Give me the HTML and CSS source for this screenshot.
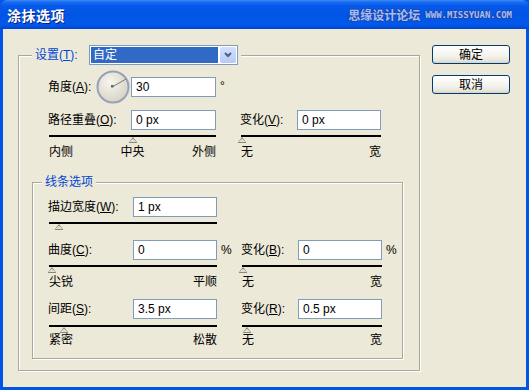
FILE: index.html
```html
<!DOCTYPE html>
<html lang="zh-CN">
<head>
    <meta charset="UTF-8">
    <title>涂抹选项</title>
    <link rel="stylesheet" href="styles.css">
</head>
<body>
    <div class="window">
        <div class="titlebar">
            <span class="title">涂抹选项</span>
            <span class="watermark">
                <span class="wm-cn">思缘设计论坛</span>
                <span class="wm-en">WWW.MISSYUAN.COM</span>
            </span>
        </div>

        <div class="client">
            <fieldset class="group group-main">
                <legend class="legend-main">
                    <span class="set-label">设置(<u>T</u>):</span>
                    <span class="dropdown">
                        <span class="dropdown-value">自定</span>
                        <span class="dropdown-btn">
                            <svg width="8" height="6" viewBox="0 0 8 6"><polyline points="1,1 4,4 7,1" fill="none" stroke="#4d6185" stroke-width="2"/></svg>
                        </span>
                    </span>
                </legend>

                <div class="section-top">
                    <div class="row row-angle">
                        <div class="field">
                            <span class="lbl lbl-angle">角度(<u>A</u>):</span>
                            <svg class="dial" width="34" height="34" viewBox="0 0 34 34">
                                <defs>
                                    <radialGradient id="dialFill" cx="40%" cy="35%" r="70%">
                                        <stop offset="0" stop-color="#f6f5ef"/>
                                        <stop offset="1" stop-color="#d6d2c2"/>
                                    </radialGradient>
                                </defs>
                                <circle cx="17" cy="17" r="15.5" fill="url(#dialFill)" stroke="#97a0bb" stroke-width="2"/>
                                <line x1="17" y1="16.5" x2="30" y2="9" stroke="#777" stroke-width="1"/>
                                <rect x="15" y="15" width="2.5" height="2.5" fill="#666"/>
                            </svg>
                            <input class="num num-angle" type="text" value="30">
                        </div>
                        <span class="unit unit-deg">°</span>
                    </div>

                    <div class="row row-field">
                        <div class="field">
                            <span class="lbl">路径重叠(<u>O</u>):</span>
                            <input class="num" type="text" value="0 px">
                        </div>
                        <span class="unit"></span>
                        <div class="field">
                            <span class="lbl">变化(<u>V</u>):</span>
                            <input class="num" type="text" value="0 px">
                        </div>
                    </div>

                    <div class="row row-slider">
                        <div class="slider"><span class="thumb" style="left: 85px"></span></div>
                        <span class="unit"></span>
                        <div class="slider"><span class="thumb" style="left: 2px"></span></div>
                    </div>

                    <div class="row row-ticks">
                        <div class="ticks"><span>内侧</span><span>中央</span><span>外侧</span></div>
                        <span class="unit"></span>
                        <div class="ticks"><span>无</span><span>宽</span></div>
                    </div>
                </div>

                <fieldset class="group group-line">
                    <legend class="legend-line">线条选项</legend>

                    <div class="row row-field row-first">
                        <div class="field">
                            <span class="lbl">描边宽度(<u>W</u>):</span>
                            <input class="num" type="text" value="1 px">
                        </div>
                    </div>
                    <div class="row row-slider">
                        <div class="slider"><span class="thumb" style="left: 11px"></span></div>
                    </div>

                    <div class="row row-field row-gap">
                        <div class="field">
                            <span class="lbl">曲度(<u>C</u>):</span>
                            <input class="num" type="text" value="0">
                        </div>
                        <span class="unit">%</span>
                        <div class="field">
                            <span class="lbl">变化(<u>B</u>):</span>
                            <input class="num" type="text" value="0">
                        </div>
                        <span class="unit">%</span>
                    </div>
                    <div class="row row-slider">
                        <div class="slider"><span class="thumb" style="left: 4px"></span></div>
                        <span class="unit"></span>
                        <div class="slider"><span class="thumb" style="left: 2px"></span></div>
                    </div>
                    <div class="row row-ticks">
                        <div class="ticks"><span>尖锐</span><span>平顺</span></div>
                        <span class="unit"></span>
                        <div class="ticks"><span>无</span><span>宽</span></div>
                    </div>

                    <div class="row row-field row-gap">
                        <div class="field">
                            <span class="lbl">间距(<u>S</u>):</span>
                            <input class="num" type="text" value="3.5 px">
                        </div>
                        <span class="unit"></span>
                        <div class="field">
                            <span class="lbl">变化(<u>R</u>):</span>
                            <input class="num" type="text" value="0.5 px">
                        </div>
                    </div>
                    <div class="row row-slider row-slider-last">
                        <div class="slider"><span class="thumb" style="left: 16px"></span></div>
                        <span class="unit"></span>
                        <div class="slider"><span class="thumb" style="left: 6px"></span></div>
                    </div>
                    <div class="row row-ticks row-ticks-last">
                        <div class="ticks"><span>紧密</span><span>松散</span></div>
                        <span class="unit"></span>
                        <div class="ticks"><span>无</span><span>宽</span></div>
                    </div>
                </fieldset>
            </fieldset>

            <div class="actions">
                <button class="btn">确定</button>
                <button class="btn">取消</button>
            </div>
        </div>
    </div>
</body>
</html>
```

FILE: styles.css
```css
html, body {
    margin: 0;
    padding: 0;
    background: #0055e5;
}
body {
    font-family: "Liberation Sans", "Noto Sans CJK SC", sans-serif;
    font-size: 12px;
    line-height: 14px;
    color: #000;
}
.window {
    width: 529px;
    height: 390px;
    display: flex;
    flex-direction: column;
    background: #0055e5;
    box-sizing: border-box;
}
.titlebar {
    height: 29px;
    flex: none;
    display: flex;
    align-items: center;
    justify-content: space-between;
    padding: 0 17px 0 7px;
    background: linear-gradient(to bottom, #3d8ff8 0px, #1a6cf0 2px, #0459ea 6px, #0055e5 16px, #0259ea 24px, #0046d2 29px);
    border-radius: 7px 7px 0 0;
}
.title {
    color: #fff;
    font-family: "Noto Sans CJK SC", sans-serif;
    font-size: 14px;
    font-weight: bold;
    line-height: 16px;
    letter-spacing: 0.5px;
    text-shadow: 1px 1px 0 #0a1f80;
    margin-top: 1px;
}
.watermark {
    display: flex;
    align-items: center;
    gap: 5px;
    color: #a4bef0;
    text-shadow: 1px 0 0 #1f45b0, -1px 0 0 #1f45b0, 0 1px 0 #1f45b0, 0 -1px 0 #1f45b0;
}
.wm-cn {
    font-family: "Noto Sans CJK SC", sans-serif;
    font-size: 12px;
    font-weight: bold;
}
.wm-en {
    font-family: "DejaVu Sans Mono", monospace;
    font-size: 9px;
    font-weight: bold;
    margin-top: 1px;
}

.client {
    flex: 1;
    margin: 0 3px 3px 3px;
    background: #ece9d8;
    display: flex;
    align-items: flex-start;
    padding: 16px 0 0 15px;
}

.group {
    margin: 0;
    min-width: 0;
    box-sizing: border-box;
    border: 1px solid #aca899;
    box-shadow: inset 1px 1px 0 #fff, 1px 1px 0 #fff;
}
.group-main {
    width: 402px;
    padding: 0 0 11px 13px;
}
.legend-main {
    padding: 0 3px;
    height: 20px;
    display: flex;
    align-items: center;
    background: #ece9d8;
}
.set-label {
    width: 54px;
    color: #0046d5;
}
.dropdown {
    width: 149px;
    height: 20px;
    box-sizing: border-box;
    border: 1px solid #7f9db9;
    background: #fff;
    display: flex;
    padding: 1px;
    gap: 2px;
}
.dropdown-value {
    flex: 1;
    background: #316ac5;
    color: #fff;
    padding-left: 2px;
    line-height: 16px;
}
.dropdown-btn {
    width: 16px;
    display: flex;
    align-items: center;
    justify-content: center;
    background: linear-gradient(#d4e1fc, #b6caf6);
    border-radius: 2px;
}

.section-top {
    margin-left: 16px;
}
.row {
    display: grid;
    grid-template-columns: 168px 24px 141px;
}
.group-line .row {
    grid-template-columns: 169px 24px 141px auto;
}
.row-angle {
    margin-top: 5px;
    height: 34px;
    align-items: center;
}
.row-field {
    margin-top: 6px;
    align-items: center;
}
.row-slider {
    margin-top: 5px;
}
.row-ticks {
    margin-top: 2px;
}
.field {
    display: flex;
    align-items: center;
}
.lbl {
    flex: 1;
    white-space: nowrap;
}
.lbl-angle {
    flex: none;
    width: 48px;
}
.dial {
    display: block;
    margin-right: 1px;
}
.num {
    width: 85px;
    height: 20px;
    box-sizing: border-box;
    border: 1px solid #7f9db9;
    padding: 0 0 0 4px;
    margin: 0;
    font: inherit;
    color: #000;
    background: #fff;
    outline: none;
}
.field + .unit + .field .num,
.group-line .num {
    width: 84px;
}
.unit {
    padding-left: 4px;
}
.unit-deg {
    align-self: center;
    margin-top: -2px;
}

.slider {
    position: relative;
    height: 8px;
}
.slider::before {
    content: "";
    display: block;
    height: 2px;
    margin-left: 1px;
    background: #000;
    border-bottom: 0;
}
.thumb {
    position: absolute;
    top: 2px;
    width: 9px;
    height: 6px;
    transform: translateX(-50%);
    background: #8a877c;
    clip-path: polygon(50% 0, 100% 100%, 0 100%);
}
.thumb::after {
    content: "";
    position: absolute;
    left: 1px;
    right: 1px;
    top: 1.6px;
    bottom: 1px;
    background: #e3e0d4;
    clip-path: polygon(50% 0, 100% 100%, 0 100%);
}
.ticks {
    display: flex;
    justify-content: space-between;
    padding-left: 1px;
}

.group-line {
    margin-top: 16px;
    width: 371px;
    padding: 0 0 11px 15px;
}
.legend-line {
    margin-left: -6px;
    padding: 0 3px;
    color: #0046d5;
    background: #ece9d8;
    line-height: 14px;
}
.row-first {
    margin-top: 8px;
}
.row-gap {
    margin-top: 10px;
}
.row-slider-last {
    margin-top: 6px;
}
.row-ticks-last {
    margin-top: 0;
}

.actions {
    display: flex;
    flex-direction: column;
    gap: 11px;
    margin-left: 12px;
}
.btn {
    width: 78px;
    height: 19px;
    padding: 0;
    border: 1px solid #003c74;
    border-radius: 3px;
    background: linear-gradient(#ffffff, #f3f2ec 60%, #e6e3d9 88%, #d6d0c5);
    font: inherit;
    color: #000;
    cursor: pointer;
}
```
